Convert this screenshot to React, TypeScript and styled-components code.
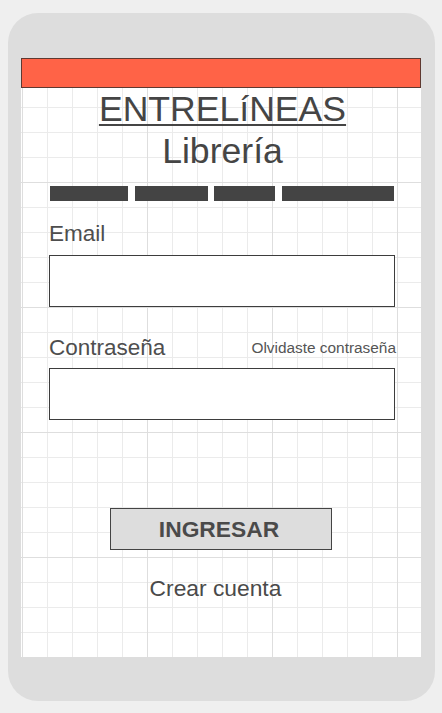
import styled, { createGlobalStyle } from 'styled-components'

const GlobalStyle = createGlobalStyle`
  html, body {
    margin: 0;
    padding: 0;
    background: #efefef;
  }
  * {
    box-sizing: border-box;
  }
  body {
    font-family: 'Liberation Sans', Arial, sans-serif;
    color: #4a4a4a;
  }
`

const Page = styled.div`
  width: 442px;
  height: 713px;
  padding: 13px 0 0 8px;
`

const PhoneFrame = styled.div`
  width: 427px;
  height: 688px;
  border-radius: 30px;
  background: #dddddd;
  padding: 45px 14px 44px 13px;
`

const Screen = styled.div`
  width: 400px;
  height: 599px;
  display: flex;
  flex-direction: column;
  background-color: #ffffff;
  background-image:
    linear-gradient(to right, #dedede 1px, transparent 1px),
    linear-gradient(to bottom, #dedede 1px, transparent 1px),
    linear-gradient(to right, #ebebeb 1px, transparent 1px),
    linear-gradient(to bottom, #ebebeb 1px, transparent 1px);
  background-size: 125px 125px, 125px 125px, 25px 25px, 25px 25px;
  background-position: 1px -1px, 1px -1px, 1px -1px, 1px -1px;
`

const TopBar = styled.div`
  height: 30px;
  flex-shrink: 0;
  background: #ff6347;
  border: 1px solid #5e3931;
`

const Brand = styled.h1`
  margin: 0;
  font-weight: 400;
  font-size: 35.6px;
  line-height: 42px;
  text-align: center;
  color: #454545;
`

const BrandName = styled.span`
  display: block;
  text-decoration: underline;
  text-decoration-thickness: 2px;
  text-underline-offset: 3px;
  margin-left: 3px;
`

const BrandSub = styled.span`
  display: block;
  margin-left: 3px;
`

const NavBars = styled.div`
  display: flex;
  gap: 6.5px;
  margin: 14px 0 0 29px;
`

const NavBar = styled.div<{ $w: number }>`
  width: ${({ $w }) => $w}px;
  height: 15px;
  background: #444444;
`

const Form = styled.div`
  display: flex;
  flex-direction: column;
  padding: 0 26px 0 28px;
`

const Label = styled.label<{ $top: number }>`
  display: block;
  margin-top: ${({ $top }) => $top}px;
  font-size: 22.5px;
  line-height: 27px;
  color: #4e4e4e;
`

const LabelRow = styled.div`
  display: flex;
  align-items: center;
  justify-content: space-between;
  margin-top: 27px;

  ${Label} {
    margin-top: 0;
  }
`

const ForgotLink = styled.a`
  font-size: 15.4px;
  line-height: 18px;
  color: #555555;
  text-decoration: none;
  margin-right: -1px;
`

const Field = styled.div<{ $top: number }>`
  height: 52px;
  margin-top: ${({ $top }) => $top}px;
  background: #ffffff;
  border: 1px solid #3d3d3d;
`

const Actions = styled.div`
  display: flex;
  flex-direction: column;
  align-items: center;
  margin-top: 88px;
`

const SubmitButton = styled.button`
  width: 222px;
  height: 42px;
  padding: 0 4px 0 0;
  background: #dddddd;
  border: 1px solid #444444;
  font-family: 'Liberation Sans', Arial, sans-serif;
  font-weight: 700;
  font-size: 22.8px;
  color: #4a4a4a;
`

const CreateLink = styled.a`
  margin: 25px 11px 0 0;
  font-size: 22.8px;
  line-height: 27px;
  color: #4a4a4a;
  text-decoration: none;
`

const navWidths = [78, 73, 61, 112]

export default function App() {
  return (
    <>
      <GlobalStyle />
      <Page>
        <PhoneFrame>
          <Screen>
            <TopBar />
            <Brand>
              <BrandName>ENTRELíNEAS</BrandName>
              <BrandSub>Librería</BrandSub>
            </Brand>
            <NavBars>
              {navWidths.map((w, i) => (
                <NavBar key={i} $w={w} />
              ))}
            </NavBars>
            <Form>
              <Label $top={19}>Email</Label>
              <Field $top={8} />
              <LabelRow>
                <Label $top={0}>Contraseña</Label>
                <ForgotLink>Olvidaste contraseña</ForgotLink>
              </LabelRow>
              <Field $top={7} />
            </Form>
            <Actions>
              <SubmitButton>INGRESAR</SubmitButton>
              <CreateLink>Crear cuenta</CreateLink>
            </Actions>
          </Screen>
        </PhoneFrame>
      </Page>
    </>
  )
}
